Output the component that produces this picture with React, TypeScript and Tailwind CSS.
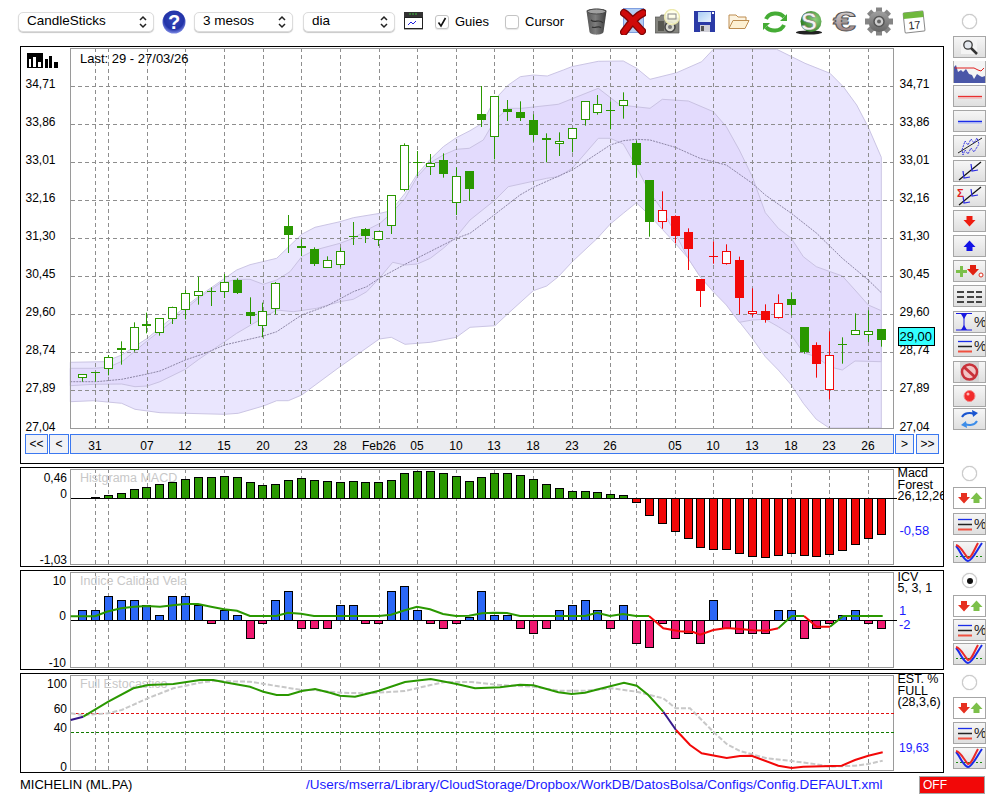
import React from "react";

const GREEN = "#2a9800";
const RED = "#f20808";
const BLUE = "#2b67f6";
const PINK = "#f01870";

const xs = Array.from({ length: 63 }, (_, i) => Math.round(82 + i * 12.885) + 0.5);
const gridX = [95.5, 108.5, 147.5, 185.5, 224.5, 263.5, 301.5, 340.5, 379.5, 417.5, 456.5, 494.5, 533.5, 572.5, 610.5, 636.5, 675.5, 713.5, 752.5, 791.5, 829.5, 868.5];
const gridY = [86.5, 124.5, 162.5, 200.5, 238.5, 276.5, 314.5, 352.5, 390.5];
const prices = ["34,71", "33,86", "33,01", "32,16", "31,30", "30,45", "29,60", "28,74", "27,89"];

// wick top, wick bottom, body top, body bottom (px over the plot, 3x), filled, red
const candles: [number, number, number, number, number, number][] = [
  [914, 935, 911, 919, 0, 0], [908, 935, 907, 911, 1, 0], [855, 916, 860, 892, 0, 0], [814, 884, 834, 840, 1, 0],
  [757, 845, 772, 838, 0, 0], [728, 790, 762, 768, 1, 0], [745, 797, 745, 787, 0, 0], [710, 762, 710, 742, 0, 0],
  [660, 748, 670, 718, 0, 0], [620, 704, 664, 676, 0, 0], [652, 708, 663, 665, 1, 0], [612, 684, 637, 664, 0, 0],
  [625, 672, 630, 668, 1, 0], [682, 762, 726, 738, 1, 0], [698, 802, 724, 766, 0, 0], [636, 733, 640, 716, 0, 0],
  [435, 549, 468, 494, 1, 0], [508, 558, 528, 534, 1, 0], [532, 588, 538, 584, 1, 0], [559, 592, 569, 589, 0, 0],
  [533, 592, 544, 583, 0, 0], [456, 525, 498, 500, 1, 0], [474, 519, 477, 497, 1, 0], [484, 528, 484, 508, 0, 0],
  [376, 492, 376, 466, 0, 0], [220, 364, 226, 358, 0, 0], [243, 318, 277, 281, 1, 0], [252, 315, 280, 289, 0, 0],
  [250, 323, 270, 311, 1, 0], [292, 435, 319, 397, 0, 0], [304, 393, 304, 359, 1, 0], [48, 171, 132, 149, 1, 0],
  [79, 268, 79, 199, 0, 0], [90, 153, 117, 125, 1, 0], [94, 153, 126, 143, 1, 0], [133, 215, 151, 197, 1, 0],
  [190, 277, 204, 209, 1, 0], [187, 258, 214, 220, 0, 0], [175, 247, 175, 205, 0, 0], [94, 167, 94, 148, 0, 0],
  [75, 134, 103, 127, 0, 0], [94, 178, 120, 122, 1, 0], [67, 146, 91, 106, 0, 0], [212, 323, 220, 287, 1, 0],
  [331, 500, 331, 458, 1, 0], [364, 476, 421, 454, 0, 1], [436, 520, 438, 497, 1, 1], [475, 600, 487, 539, 1, 1],
  [628, 711, 628, 665, 1, 1], [514, 581, 558, 560, 1, 1], [523, 584, 544, 580, 0, 1], [560, 733, 571, 686, 1, 1],
  [655, 740, 724, 731, 0, 1], [703, 758, 724, 752, 1, 1], [673, 746, 700, 742, 0, 1], [667, 736, 688, 707, 1, 0],
  [772, 851, 772, 848, 1, 0], [817, 923, 826, 884, 1, 1], [784, 988, 856, 958, 0, 1], [802, 881, 823, 825, 1, 0],
  [730, 794, 779, 790, 0, 0], [721, 816, 784, 793, 0, 0], [778, 830, 778, 812, 1, 0],
];

const outerBand =
  "70.3,362.3 105,361.7 121.7,355 147.3,338.3 185.3,306.7 198.3,296.7 236.7,270 250,264.7 276.7,258.3 301.7,234.3 315,227.3 340,221.7 353.3,217.7 380,213.3 391.3,210.7 405,193.3 417.3,174 430.3,159.3 443.3,146.7 456.3,137.7 470,130.7 482.3,123.3 494.3,100 508.3,85 520.3,76.7 533.3,75 547.3,76 563.3,70 571.7,66.7 598.3,61.3 623.3,61 636.7,68.3 650,79.3 676.7,72.7 701.7,61.7 713.3,49.3 776.7,49.3 805,63.3 830,73.3 843.3,86.7 856.7,105 868.3,127.3 881.3,157.3 881.3,428 829.3,428 816.3,419.3 803.3,403.3 791.3,385 778.3,370 765.3,356.7 752.3,338.3 739.3,321.7 726.3,303.3 713.3,290 700.3,276.7 688.3,258.3 675.3,243.3 662.3,229.3 649.3,215 636.3,202.7 623.3,213.3 610.3,224 597.3,238.3 572.3,261.7 558.3,276.7 546.7,286 533.3,290.7 508.3,313.3 495,325.7 470,327.3 456.3,337.3 430.3,342.3 405,344.3 391.3,337.3 379.3,339 340,366.7 301.7,395 288.3,400.7 276.7,400.7 263.3,406 238.3,413.3 224.3,414.3 185.3,413.3 160,412.7 135,409.3 121.7,403.3 93.3,400.7 70.3,401.7";
const innerBand =
  "70.3,368.3 93.3,368.3 108.3,367.3 123.3,360.7 147.3,340.7 173.3,320.7 185.3,309.3 198.3,298.3 220,283.3 236.7,279.3 250,279.3 263.3,284.3 276.7,280 290,271.7 301.7,256.7 315,250 340,243.3 353.3,238.3 366.7,230 380,223.3 391.3,213.3 405,198.3 417.3,176.7 430.3,162.7 443.3,155 456.3,149.3 469.3,148.3 483.3,140 495,120 508.3,108.3 521.7,108.3 558.3,104.3 598.3,88.3 620,105 650,108.3 662.3,99.3 688.3,101 713.3,111.7 726.3,126.7 739.3,150 752.3,176.7 765.3,212.7 778.3,228.3 791.3,238.3 803.3,256.7 816.3,266.7 842.3,276 855,290 868.3,305 881.3,310.7 881.3,361.7 855,361 842.3,370 829.3,366.7 816.3,356.7 803.3,352.7 791.3,335 778.3,326.7 765.3,319.3 752.3,320 739.3,322.3 726.3,305 713.3,291.7 700.3,277 688.3,258.7 675.3,233.3 662.3,210 649.3,191.7 636.3,166.7 623.3,144 610.3,138.3 598.3,138.3 572.3,168.3 558.3,176.7 546.7,178.3 508.3,186.7 495,200 470,220 456.3,236.7 443.3,248.3 430.3,258.3 417.3,264 405,265 392.7,262.3 379.3,278.3 366.7,291.7 353.3,299.3 340,301.7 316.7,308.3 293.3,311.7 276.7,310 263.3,317.7 236.7,333.3 210,351.7 198.3,359.7 185.3,369.3 160,381.7 147.3,386 135,386.7 121.7,384 93.3,384.3 70.3,385.7";
const smaLine =
  "70.3,381.7 96.7,381.7 121.7,379.3 147.3,374 160,371 185.3,360 206.7,352.7 224.3,345 263.3,336 276.7,331.7 301.7,315 326.7,306 353.3,291.7 366.7,286.7 379.3,278.3 405,264.3 456.3,238.3 470,233.3 483.3,223.3 520,195 533.3,187.3 572.3,170 610.3,145 623.3,140.7 636.3,139.3 650,140 675.3,147.3 700,158.3 726.3,165 752.3,183.3 765.3,195 791.3,213.3 816.7,233.3 842.3,258.3 868.3,280 881.3,292.7";

const macd = [0, 1, 3, 5, 9, 11, 14, 16, 19, 21, 21, 22, 21, 16, 13, 14, 18, 20, 18, 17, 16, 17, 16, 16, 18, 25, 27, 27, 25, 22, 17, 21, 25, 25, 23, 19, 14, 10, 7, 7, 6, 4, 3, -4, -17, -25, -33, -40, -49, -51, -51, -55, -58, -59, -57, -55, -57, -58, -56, -52, -46, -40, -36];
const icv = [10, 10, 24, 20, 20, 15, 5, 24, 24, 15, -3, 10, 5, -18, -3, 20, 29, -8, -8, -8, 15, 15, -3, -3, 29, 34, 10, -3, -8, -3, 3, 29, 5, 5, -8, -13, -8, 10, 15, 20, 10, -8, 15, -23, -27, -3, -18, -13, -23, 20, -8, -13, -13, -13, 10, 10, -18, -8, -3, 5, 10, -3, -8];

const dateLabels: [string, number][] = [["31", 95], ["07", 147], ["12", 185], ["15", 224], ["20", 263], ["23", 301], ["28", 340], ["Feb26", 379], ["05", 417], ["10", 456], ["13", 494], ["18", 533], ["23", 572], ["26", 610], ["05", 675], ["10", 713], ["13", 752], ["18", 791], ["23", 829], ["26", 868]];

const VGrid = ({ top, bottom }: { top: number; bottom: number }) => (
  <>
    {gridX.map((x) => (
      <line key={x} x1={x} x2={x} y1={top} y2={bottom} stroke="#8e8e8e" strokeDasharray="4 3" />
    ))}
  </>
);

const Frame = ({ top, bottom }: { top: number; bottom: number }) => (
  <rect x={70.5} y={top} width={823} height={bottom - top} fill="none" stroke="#9a9a9a" />
);

const Label = ({ x, y, children, end, className = "fill-black text-[12px]" }: { x: number; y: number; children: React.ReactNode; end?: boolean; className?: string }) => (
  <text x={x} y={y} textAnchor={end ? "end" : "start"} className={className}>
    {children}
  </text>
);

const SIDE = "fill-black text-[12.5px]";
const VALUE = "fill-[#1a1aff] text-[13px]";

const MainChart = () => (
  <svg viewBox="21 47 922 387" width={922} height={387} className="block">
    <polygon points={outerBand} fill="#eae6fe" stroke="#cbc5e4" />
    <polygon points={innerBand} fill="#e3dbfd" stroke="#c9c2e2" />
    {gridY.map((y) => (
      <line key={y} x1={71} x2={893} y1={y} y2={y} stroke="#8e8e8e" strokeDasharray="4 3" />
    ))}
    <VGrid top={48} bottom={429} />
    <polyline points={smaLine} fill="none" stroke="#8d86a6" strokeDasharray="2 1" />
    <Frame top={48.5} bottom={428.5} />
    {candles.map(([wt, wb, bt, bb, filled, red], i) => {
      const color = red ? RED : GREEN;
      const top = Math.round(bt / 3 + 70) + 0.5;
      const h = Math.max(Math.round((bb - bt) / 3), 1);
      return (
        <g key={i}>
          <line x1={xs[i]} x2={xs[i]} y1={wt / 3 + 70} y2={wb / 3 + 70} stroke={color} />
          {filled ? (
            <rect x={xs[i] - 4.5} y={top - 0.5} width={9} height={h} fill={color} />
          ) : (
            <rect x={xs[i] - 4} y={top} width={8} height={h} fill="white" stroke={color} />
          )}
        </g>
      );
    })}
    <path d="M27 53h16v15h-16z" fill="black" />
    <path d="M29 59h2v8h-2zM33 57h3v10h-3zM38 62h3v5h-3z" fill="white" />
    <path d="M45 59h3v9h-3zM49 56h3v12h-3zM54 62h4v6h-4z" fill="black" />
    <Label x={80} y={63} className="fill-black text-[13px]">Last: 29 - 27/03/26</Label>
    {prices.map((p, i) => (
      <React.Fragment key={p}>
        <Label x={25.5} y={gridY[i] + 1.5}>{p}</Label>
        <Label x={899.5} y={gridY[i] + 1.5}>{p}</Label>
      </React.Fragment>
    ))}
    <Label x={25.5} y={431}>27,04</Label>
    <Label x={899.5} y={431}>27,04</Label>
    <rect x={898.5} y={327.5} width={36} height={18} fill="#33ffff" stroke="black" />
    <Label x={899.5} y={341} className="fill-black text-[13px]">29,00</Label>
  </svg>
);

const Scroller = () => (
  <div className="flex h-[20px] text-[12px] text-black">
    <div className="ml-[4px] w-[23px] border border-[#3b78f0] bg-[#f1f2f6] flex items-center justify-center">&lt;&lt;</div>
    <div className="ml-[1px] w-[20px] border border-[#3b78f0] bg-[#f1f2f6] flex items-center justify-center">&lt;</div>
    <div className="ml-[1px] w-[824px] border border-[#3b78f0] bg-[#ebecf0] relative">
      {dateLabels.map(([label, x], i) => (
        <span key={i} className="absolute top-[2px] -translate-x-1/2" style={{ left: x - 71 }}>
          {label}
        </span>
      ))}
    </div>
    <div className="ml-[1px] w-[19px] border border-[#3b78f0] bg-[#f1f2f6] flex items-center justify-center">&gt;</div>
    <div className="ml-[2px] w-[23px] border border-[#3b78f0] bg-[#f1f2f6] flex items-center justify-center">&gt;&gt;</div>
  </div>
);

const Bars = ({ values, zero, pos, neg }: { values: number[]; zero: number; pos: string; neg: string }) => (
  <>
    {values.map((v, i) =>
      v === 0 ? null : (
        <rect key={i} x={xs[i] - 4} y={v > 0 ? zero - v : zero} width={8} height={Math.abs(v)} fill={v > 0 ? pos : neg} stroke="black" />
      ),
    )}
  </>
);

const MacdPanel = () => (
  <svg viewBox="21 468 922 98" width={922} height={98} className="block">
    <VGrid top={469} bottom={565} />
    <Frame top={469.5} bottom={564.5} />
    <Label x={80} y={482} className="fill-[#c8c8c8] text-[12.5px]">Histgrama MACD</Label>
    <Bars values={macd} zero={498.5} pos={GREEN} neg={RED} />
    <line x1={71} x2={897} y1={498.5} y2={498.5} stroke="black" />
    <Label x={67} y={482} end>0,46</Label>
    <Label x={67} y={498} end>0</Label>
    <Label x={67} y={564} end>-1,03</Label>
    <Label x={897.5} y={477} className={SIDE}>Macd</Label>
    <Label x={897.5} y={489} className={SIDE}>Forest</Label>
    <Label x={897.5} y={500} className={SIDE}>26,12,26</Label>
    <Label x={899.5} y={535} className={VALUE}>-0,58</Label>
  </svg>
);

const IcvPanel = () => (
  <svg viewBox="21 571 922 98" width={922} height={98} className="block">
    <VGrid top={572} bottom={668} />
    <Frame top={572.5} bottom={667.5} />
    <Label x={80} y={585} className="fill-[#c8c8c8] text-[12.5px]">Indice Calidad Vela</Label>
    <Bars values={icv} zero={620.5} pos={BLUE} neg={PINK} />
    <line x1={71} x2={897} y1={620.5} y2={620.5} stroke="black" />
    <polyline fill="none" stroke={GREEN} strokeWidth={2} points="70.7,616.3 95,616.3 106.7,611.7 121,608.3 134,606.7 147,606 160,606.7 173,605.3 185,604 198,604 211,606.7 224,609.3 237,610.7 250,616 263,616 276,616 288,612.7 301,613.7 314,616 327,616 340,616 353,616 366,616 379,616 391,614.7 404,610.5 417,606.7 430,609.3 443,614 456,616 469,615.7 482,613.3 494,612.7 507,613 520,616 533,616 546,616 559,616 572,616 585,616 597,612.7 610,616 623,614 636,616 649,616" />
    <polyline fill="none" stroke={RED} strokeWidth={2} points="649,616 663.3,628.3 680,631.3 693.3,632 700,634.7 713.3,630 726.7,628 740,629 753.3,630.3 766.7,630.7 778.3,628.3" />
    <polyline fill="none" stroke={GREEN} strokeWidth={2} points="778.3,628.3 791.7,616 804,616" />
    <polyline fill="none" stroke={RED} strokeWidth={2} points="804,616 816.7,626.7 830,626.7" />
    <polyline fill="none" stroke={GREEN} strokeWidth={2} points="830,626.7 843.3,616 882.7,616" />
    <Label x={66} y={585} end>10</Label>
    <Label x={66} y={620} end>0</Label>
    <Label x={66} y={667} end>-10</Label>
    <Label x={897.5} y={581} className={SIDE}>ICV</Label>
    <Label x={897.5} y={592} className={SIDE}>5, 3, 1</Label>
    <Label x={899} y={615} className={VALUE}>1</Label>
    <Label x={899} y={629} className={VALUE}>-2</Label>
  </svg>
);

const StochPanel = () => (
  <svg viewBox="21 674 922 98" width={922} height={98} className="block">
    <VGrid top={675} bottom={771} />
    <Frame top={675.5} bottom={770.5} />
    <line x1={71} x2={895} y1={713.5} y2={713.5} stroke="#e01010" strokeDasharray="3 2" />
    <line x1={71} x2={895} y1={732.5} y2={732.5} stroke="#127a00" strokeDasharray="3 2" />
    <Label x={80} y={688} className="fill-[#c8c8c8] text-[12.5px]">Full Estocastico</Label>
    <polyline fill="none" stroke="#c8c8c8" strokeWidth={2} strokeDasharray="5 2" points="70.7,713.3 83.3,715 108.3,713.3 121.7,710 147.7,698.3 173.3,688.3 200,682.7 213.3,681 250,681.7 276.7,686 301.7,690 315,690 340.3,692.7 366.7,693.3 405,691 430.7,685 445,682 471.7,682 500,685 533.3,686.7 558.3,690.7 585,690.7 612.3,688.3 636.7,691.7 663.3,698.3 675.7,708.3 690,708.3 701.7,720 713.3,731.7 726.7,744 740,751 766.7,758.3 791.7,761 816.7,764.3 830,766.7 855,765.7 868.3,764 882.7,760.7" />
    <polyline fill="none" stroke="#34178a" strokeWidth={2} points="70.7,720 83.3,716.7" />
    <polyline fill="none" stroke={GREEN} strokeWidth={2} points="83.3,716.7 108.3,701.7 133.3,688.3 148.3,685 173.3,684 200,680 213.3,680 223.3,682 250,686.7 263.3,691.7 276.7,695 288.3,695 301.7,691 315,689 330,692.7 340,695.7 355,696.7 379,690.7 405,682 430.7,679 456.7,684 475,688.3 500,687.3 520,684.7 533.3,685.3 558.3,692.3 571.7,694 585,692.7 598.3,689.3 624,682.7 636.7,685.7 648.3,695 663.3,711.7" />
    <polyline fill="none" stroke="#34178a" strokeWidth={2} points="663.3,711.7 676,730" />
    <polyline fill="none" stroke={RED} strokeWidth={2} points="676,730 690,745 701.7,753.3 726.7,758 740,756 751.7,755.7 778.3,765.7 791.7,768 803.3,766.7 841.7,765.7 855,760 868.3,755.7 882.7,752.3" />
    <Label x={67} y={688} end>100</Label>
    <Label x={67} y={713} end>60</Label>
    <Label x={67} y={732} end>40</Label>
    <Label x={67} y={771} end>0</Label>
    <Label x={897.5} y={683} className={SIDE}>EST. %</Label>
    <Label x={897.5} y={695} className={SIDE}>FULL</Label>
    <Label x={897.5} y={706} className={SIDE}>(28,3,6)</Label>
    <Label x={899} y={752} className="fill-[#1a1aff] text-[12px]">19,63</Label>
  </svg>
);

const Chevrons = () => (
  <svg width="8" height="14" viewBox="0 0 8 14" fill="none" stroke="#222" strokeWidth="1.5">
    <path d="M1 5l3-3 3 3M1 9l3 3 3-3" />
  </svg>
);

const Select = ({ label, className }: { label: string; className: string }) => (
  <div className={`flex items-center justify-between h-[20px] rounded-[5px] bg-white border border-[#dcdcdc] shadow-[0_1px_1px_rgba(0,0,0,0.22)] pr-[6px] text-[13.5px] text-black ${className}`}>
    <span>{label}</span>
    <Chevrons />
  </div>
);

const Checkbox = ({ checked, className }: { checked?: boolean; className: string }) => (
  <div className={`w-[14px] h-[14px] rounded-[3px] border border-[#c4c4c4] bg-white shadow-[0_1px_1px_rgba(0,0,0,0.1)] flex items-center justify-center ${className}`}>
    {checked && (
      <svg width="12" height="12" viewBox="0 0 12 12" fill="none" stroke="#111" strokeWidth="1.6">
        <path d="M2.5 6.5l2.5 3.5 4.5-8" />
      </svg>
    )}
  </div>
);

const Radio = ({ on, className }: { on?: boolean; className: string }) => (
  <div className={`w-[15px] h-[15px] self-center rounded-full border border-[#c8c8c8] bg-white shadow-[0_0_1px_rgba(0,0,0,0.3)] flex items-center justify-center ${className}`}>
    {on && <div className="w-[6px] h-[6px] rounded-full bg-[#111]" />}
  </div>
);

const HelpIcon = () => (
  <svg width="24" height="24" viewBox="0 0 24 24" className="ml-[8px]">
    <defs>
      <radialGradient id="helpBall" cx="50%" cy="40%" r="60%">
        <stop offset="0%" stopColor="#3346b8" />
        <stop offset="70%" stopColor="#2233a8" />
        <stop offset="100%" stopColor="#7f8ce6" />
      </radialGradient>
    </defs>
    <circle cx="12" cy="12" r="11.5" fill="url(#helpBall)" />
    <text x="12" y="18.5" textAnchor="middle" className="fill-white text-[20px] font-bold">?</text>
  </svg>
);

const ChartIcon = () => (
  <svg width="20" height="19" viewBox="0 0 20 19" className="ml-[9px]">
    <rect x="0" y="0" width="19" height="5" fill="#333" />
    <path d="M5 2h9" stroke="#3cc03c" strokeDasharray="2 1" />
    <rect x="0.5" y="5.5" width="18" height="11" fill="white" stroke="#222" />
    <path d="M4 13l3-3 2 2 3-3" fill="none" stroke="#2222dd" />
    <rect x="0" y="17" width="19" height="1" fill="#aaa" />
  </svg>
);

const TrashIcon = () => (
  <svg width="21" height="27" viewBox="0 0 21 27">
    <defs>
      <linearGradient id="trashBody" x1="0" x2="1" y1="0" y2="0">
        <stop offset="0%" stopColor="#555" />
        <stop offset="45%" stopColor="#7d7d7d" />
        <stop offset="100%" stopColor="#3c3c3c" />
      </linearGradient>
    </defs>
    <path d="M0.5 3c0-3 20-3 20 0l-3 21c-1 3.5-13 3.5-14 0z" fill="url(#trashBody)" />
    <ellipse cx="10.5" cy="3.5" rx="9" ry="2.5" fill="#a0a0a0" stroke="#4a4a4a" />
    <path d="M5 12c4 4 8-2 12 3M6 19c3 2 7-2 9 1" fill="none" stroke="#333" strokeWidth="1.2" />
  </svg>
);

const DeleteIcon = () => (
  <svg width="26" height="27" viewBox="0 0 26 27">
    <rect x="3.5" y="0.5" width="20" height="24" fill="#b4cdf3" stroke="#7f9fe0" />
    <path d="M4 5c5 3 12 12 18 18M23 5c-7 3-14 12-19 19" fill="none" stroke="#7c0505" strokeWidth="8" strokeLinecap="round" />
    <path d="M4 5c5 3 12 12 18 18M23 5c-7 3-14 12-19 19" fill="none" stroke="#cf0a0a" strokeWidth="5.5" strokeLinecap="round" />
  </svg>
);

const CameraIcon = () => (
  <svg width="26" height="25" viewBox="0 0 26 25">
    <path d="M0 8h5l1-2h5v3h13v15H0z" fill="#84847e" stroke="#555" strokeWidth="0.7" />
    <rect x="3" y="12" width="6" height="10" fill="#56564f" />
    <circle cx="15" cy="18" r="5" fill="#d8d8cf" stroke="#444" strokeWidth="1.5" />
    <circle cx="15" cy="18" r="2" fill="#777" />
    <circle cx="17" cy="8" r="7.5" fill="#ffffe6" fillOpacity="0.85" stroke="#ece9ae" strokeWidth="1.3" />
    <rect x="13" y="5" width="8" height="5" fill="none" stroke="#888" />
  </svg>
);

const SaveIcon = () => (
  <svg width="21" height="21" viewBox="0 0 21 21">
    <defs>
      <linearGradient id="floppyLabel" x1="0" x2="1" y1="0" y2="1">
        <stop offset="0%" stopColor="#a9cdf5" />
        <stop offset="100%" stopColor="#e8f2fd" />
      </linearGradient>
    </defs>
    <rect width="21" height="21" fill="#2b3aa6" />
    <rect x="4" y="1" width="13" height="10" fill="url(#floppyLabel)" />
    <rect x="18" y="1" width="2" height="2" fill="white" />
    <rect x="6" y="14" width="10" height="7" fill="#d0d0d8" />
    <rect x="7" y="15" width="3" height="5" fill="#555" />
  </svg>
);

const FolderIcon = () => (
  <svg width="22" height="17" viewBox="0 0 22 17">
    <path d="M1 15V2h7l2 2h8v3" fill="#fcf3e0" stroke="#bd8d50" />
    <path d="M1 15.5l4-8h16l-4 8z" fill="#fdf0d2" stroke="#bd8d50" />
  </svg>
);

const RefreshIcon = () => (
  <svg width="24" height="22" viewBox="0 0 24 22">
    <path d="M3 8c3-7 14-7 18-2" fill="none" stroke="#45ac35" strokeWidth="4" />
    <path d="M21 14c-3 7-14 7-18 2" fill="none" stroke="#45ac35" strokeWidth="4" />
    <path d="M24 3v7h-7zM0 19v-7h7z" fill="#45ac35" />
  </svg>
);

const CoinIcon = () => (
  <svg width="27" height="28" viewBox="0 -2 27 28">
    <defs>
      <radialGradient id="coinBall" cx="70%" cy="40%" r="70%">
        <stop offset="0%" stopColor="#8fd07e" />
        <stop offset="100%" stopColor="#2e7d22" />
      </radialGradient>
    </defs>
    <ellipse cx="13" cy="22.5" rx="13" ry="2" fill="#222" />
    <circle cx="15" cy="11.5" r="10.5" fill="url(#coinBall)" />
    <text x="13" y="20" textAnchor="middle" stroke="#777" strokeWidth="0.5" className="fill-[#f2f2f2] text-[24px] font-bold">S</text>
  </svg>
);

const EuroIcon = () => (
  <svg width="25" height="32" viewBox="0 -4 25 32">
    <defs>
      <linearGradient id="euroFill" x1="0" x2="0" y1="0" y2="1">
        <stop offset="0%" stopColor="#dcdcdc" />
        <stop offset="100%" stopColor="#8d6f6f" />
      </linearGradient>
    </defs>
    <text x="12.5" y="21" textAnchor="middle" textLength="23" lengthAdjust="spacingAndGlyphs" fill="url(#euroFill)" stroke="#555" strokeWidth="0.8" className="text-[27px] font-bold">€</text>
  </svg>
);

const GearIcon = () => (
  <svg width="28" height="29" viewBox="0 0 28 29">
    <defs>
      <linearGradient id="gearFill" x1="0" x2="0" y1="0" y2="1">
        <stop offset="0%" stopColor="#a0a0a0" />
        <stop offset="100%" stopColor="#666" />
      </linearGradient>
    </defs>
    {[0, 45, 90, 135, 180, 225, 270, 315].map((a) => (
      <rect key={a} x="11" y="0.5" width="6" height="8" fill="#858585" transform={`rotate(${a} 14 14.5)`} />
    ))}
    <circle cx="14" cy="14.5" r="10.5" fill="url(#gearFill)" />
    <circle cx="14" cy="14.5" r="5" fill="#cfcfcf" stroke="#555" strokeWidth="1.5" />
    <circle cx="14" cy="14.5" r="2" fill="#666" />
  </svg>
);

const CalendarIcon = () => (
  <svg width="24" height="25" viewBox="0 0 24 25">
    <g transform="rotate(-6 12 12.5)">
      <rect x="2" y="3" width="20" height="20" rx="1" fill="white" stroke="#8a8a8a" />
      <rect x="2" y="3" width="20" height="6" fill="#6fb83c" />
      <text x="12" y="20" textAnchor="middle" className="fill-[#222] text-[11px]">17</text>
    </g>
  </svg>
);

const Tile = ({ className, children }: { className: string; children: React.ReactNode }) => (
  <div className={`w-[33px] h-[22px] shrink-0 border border-[#a6a6a6] bg-linear-to-b from-[#f6f6f6] to-[#dfdfdf] ${className}`}>
    <svg width="31" height="20" viewBox="0 0 31 20" className="block">
      {children}
    </svg>
  </div>
);

const Down = ({ x, y = 10, color }: { x: number; y?: number; color: string }) => (
  <path d={`M${x - 3} ${y - 5}h6v4h3l-6 6.5-6-6.5h3z`} fill={color} />
);
const Up = ({ x, y = 10, color }: { x: number; y?: number; color: string }) => (
  <path d={`M${x - 3} ${y + 5}h6v-4h3l-6-6.5-6 6.5h3z`} fill={color} />
);

const Pct = () => (
  <text x={20} y={15} className="fill-[#222] text-[14px]">%</text>
);

const LinesPct = () => (
  <>
    <path d="M4 5.5h14" stroke="#1a2ce8" strokeWidth="1.3" />
    <path d="M4 10.5h14" stroke="#222" strokeWidth="1.5" />
    <path d="M4 15.5h14" stroke="#ef5040" strokeWidth="2" />
    <Pct />
  </>
);

const VCurves = () => (
  <>
    <path d="M2 14.5h28" stroke="#1e8a14" strokeDasharray="2 2" />
    <path d="M2 4C6 8 9 18 14 19 18 19 23 8 28 1" fill="none" stroke="#1a2ce8" strokeWidth="2" />
    <path d="M2 3C7 4 10 12 14 16 17 17 20 8 24 1" fill="none" stroke="#ea2a2a" strokeWidth="2" />
  </>
);

const TrendArrows = () => (
  <>
    <path d="M5 19L27 1" stroke="#111" strokeWidth="1.2" />
    <path d="M17 3l1 7 6-1M9 10l1 7 6-1" fill="none" stroke="#2a2ae0" strokeWidth="1.2" />
  </>
);

const ArrowTile = ({ className }: { className: string }) => (
  <div className={`w-[33px] h-[22px] shrink-0 border border-[#a6a6a6] bg-white ${className}`}>
    <svg width="31" height="20" viewBox="0 0 31 20" className="block">
      <Down x={10} color="#e63020" />
      <Up x={22.5} color="#7cc04a" />
    </svg>
  </div>
);

const SideColumn = () => (
  <div className="ml-[9px] w-[33px] flex flex-col">
    <Radio className="mt-[14px]" />
    <Tile className="mt-[7px]">
      <rect x="7" y="2" width="16" height="15" fill="#f4f4f4" />
      <circle cx="14" cy="8" r="4.2" fill="#e4e8ee" stroke="#3c3c3c" strokeWidth="1.3" />
      <path d="M17 11l6 6" stroke="#333" strokeWidth="2.5" />
    </Tile>
    <div className="w-[33px] h-[22px] mt-[3px] border-x border-[#b0b0b0] bg-[#f4f4f4]">
      <svg width="31" height="22" viewBox="0 0 31 22" className="block">
        <path d="M0 22V6l2-2 2 7 3-2 2 2 3-3 3 5 3 1 2 4 3-5 3 2 2 1 3-1v7z" fill="#4a57a8" />
        <path d="M1 7h9l10 0 4 2 3 1 3-3" fill="none" stroke="#e02020" />
      </svg>
    </div>
    <Tile className="mt-[2px]">
      <path d="M4 10.5h24" stroke="#e83030" strokeWidth="1.3" />
      <path d="M4 12h24" stroke="#f3a3a3" />
    </Tile>
    <Tile className="mt-[3px]">
      <path d="M4 10.5h24" stroke="#1a2ce8" strokeWidth="1.5" />
      <path d="M4 12h24" stroke="#a4b0f4" />
    </Tile>
    <Tile className="mt-[3px]">
      <path d="M4 17L28 2" stroke="#222" />
      <path d="M8 14l3-9 3 4 3-6 3 4 3-5 2 6-5 8-3-4-3 6-3-4-2 5z" fill="none" stroke="#3a3ae0" strokeDasharray="2 1" />
    </Tile>
    <Tile className="mt-[3px]"><TrendArrows /></Tile>
    <Tile className="mt-[3px]">
      <TrendArrows />
      <text x={3} y={11} className="fill-[#e02020] text-[11px] font-bold">Σ</text>
    </Tile>
    <Tile className="mt-[3px]"><Down x={15.5} color="#ee1c10" /></Tile>
    <Tile className="mt-[3px]"><Up x={15.5} color="#1414e6" /></Tile>
    <Tile className="mt-[3px]">
      <path d="M6 5h3v4h4v3H9v4H6v-4H2V9h4z" fill="#7cc04a" />
      <Down x={19} y={9} color="#e02010" />
      <circle cx="27" cy="14" r="2" fill="white" stroke="#e03020" />
    </Tile>
    <Tile className="mt-[3px]">
      <path d="M3 6h7M13 6h7M22 6h6M3 11h7M13 11h7M22 11h6M3 16h7M13 16h7M22 16h6" stroke="#454545" strokeWidth="2" />
    </Tile>
    <Tile className="mt-[4px]">
      <path d="M2 1.5h16M2 18h16M10 2v16" stroke="#1a1ae0" />
      <path d="M7 2h6l-3 5zM7 18h6l-3-5z" fill="#1a1ae0" />
      <Pct />
    </Tile>
    <Tile className="mt-[2px]"><LinesPct /></Tile>
    <Tile className="mt-[4px]">
      <rect x="6" y="0" width="19" height="20" fill="#d4d4d4" />
      <circle cx="15.5" cy="10" r="7.5" fill="#f2c4c4" stroke="#c8323a" strokeWidth="2.5" />
      <path d="M10 5l11 10" stroke="#c8323a" strokeWidth="3" />
    </Tile>
    <Tile className="mt-[2px]">
      <circle cx="15.5" cy="10" r="5.5" fill="#f22c2c" stroke="#f58a8a" />
      <circle cx="14" cy="8" r="1.5" fill="#ffb4b4" />
    </Tile>
    <Tile className="mt-[1px]">
      <path d="M8 8c2-4 8-5 12-3" fill="none" stroke="#1a56d0" strokeWidth="2" />
      <path d="M18 1l6 3-5 4z" fill="#1a56d0" />
      <path d="M23 12c-2 4-8 5-12 3" fill="none" stroke="#3d8de8" strokeWidth="2" />
      <path d="M13 19l-6-3 5-4z" fill="#3d8de8" />
    </Tile>

    <Radio className="mt-[36px]" />
    <ArrowTile className="mt-[6px]" />
    <Tile className="mt-[4px]"><LinesPct /></Tile>
    <Tile className="mt-[6px]"><VCurves /></Tile>

    <Radio on className="mt-[10px]" />
    <ArrowTile className="mt-[7px]" />
    <Tile className="mt-[2px]"><LinesPct /></Tile>
    <Tile className="mt-[2px]"><VCurves /></Tile>

    <Radio className="mt-[10px]" />
    <ArrowTile className="mt-[7px]" />
    <Tile className="mt-[3px]"><LinesPct /></Tile>
    <Tile className="mt-[3px]"><VCurves /></Tile>
  </div>
);

const Toolbar = () => (
  <div className="h-[46px] pb-[3px] pl-[18px] flex items-center text-[13px] text-black">
    <Select label="CandleSticks" className="w-[136px] pl-[8px]" />
    <HelpIcon />
    <Select label="3 mesos" className="ml-[8px] w-[99px] pl-[8px]" />
    <Select label="dia" className="ml-[10px] w-[92px] pl-[8px]" />
    <ChartIcon />
    <Checkbox checked className="ml-[11px]" />
    <span className="ml-[6px] w-[50px]">Guies</span>
    <Checkbox className="" />
    <span className="ml-[6px] w-[61px]">Cursor</span>
    <TrashIcon />
    <div className="ml-[13px]"><DeleteIcon /></div>
    <div className="ml-[9px]"><CameraIcon /></div>
    <div className="ml-[13px]"><SaveIcon /></div>
    <div className="ml-[13px]"><FolderIcon /></div>
    <div className="ml-[13px]"><RefreshIcon /></div>
    <div className="ml-[9px]"><CoinIcon /></div>
    <div className="ml-[9px]"><EuroIcon /></div>
    <div className="ml-[8px]"><GearIcon /></div>
    <div className="ml-[9px]"><CalendarIcon /></div>
  </div>
);

export default function App() {
  return (
    <div className="w-[1000px] h-[800px] bg-white overflow-hidden [font-family:'Liberation_Sans',Arial,sans-serif]">
      <div className="flex">
        <div className="w-[944px] shrink-0">
          <Toolbar />
          <div className="ml-[20px] flex flex-col gap-[3px]">
            <div className="h-[418px] border border-black">
              <MainChart />
              <Scroller />
            </div>
            <div className="h-[100px] border border-black"><MacdPanel /></div>
            <div className="h-[100px] border border-black"><IcvPanel /></div>
            <div className="h-[100px] border border-black"><StochPanel /></div>
          </div>
        </div>
        <SideColumn />
      </div>
      <div className="h-[24px] flex items-center pl-[20px] text-[13px]">
        <span className="w-[286px] text-black">MICHELIN (ML.PA)</span>
        <span className="w-[613px] text-[13.5px] text-[#1a1aff]">/Users/mserra/Library/CloudStorage/Dropbox/WorkDB/DatosBolsa/Configs/Config.DEFAULT.xml</span>
        <div className="w-[66px] h-[18px] border border-[#a6a6a6] bg-[#f20808] text-white text-[12px] pl-[3px] flex items-center">OFF</div>
      </div>
    </div>
  );
}
